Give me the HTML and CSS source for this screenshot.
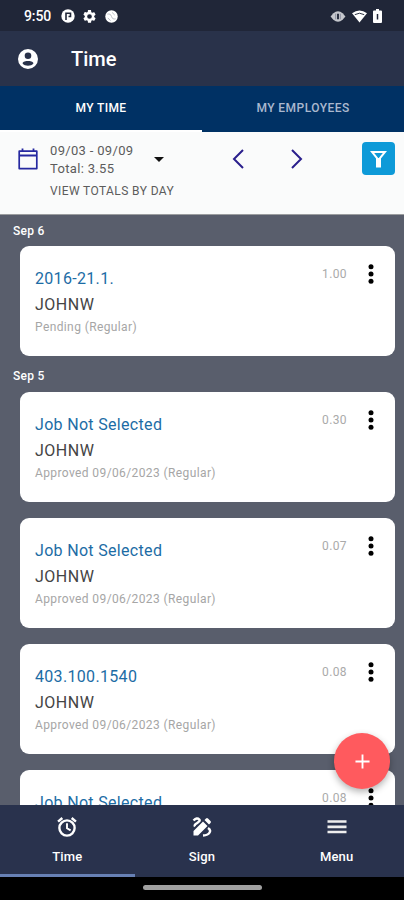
FILE: index.html
```
<!DOCTYPE html>
<html lang="en">
<head>
<meta charset="utf-8">
<title>Time</title>
<link rel="stylesheet" href="styles.css">
</head>
<body>
<div class="app">
  <div class="status">
    <span class="clock">9:50</span>
    <svg class="s-p" viewBox="0 0 14 14"><circle cx="7" cy="7" r="6.7" fill="#fff"/><path d="M5 11V4.200h4.500v3.300H7.500" fill="none" stroke="#202638" stroke-width="1.600"/></svg>
    <svg class="s-gear" viewBox="2 2 20 20"><path fill="#fff" d="M19.14 12.94c.04-.3.06-.61.06-.94s-.02-.64-.07-.94l2.03-1.58a.5.5 0 0 0 .12-.61l-1.92-3.32a.5.5 0 0 0-.59-.22l-2.39.96a7 7 0 0 0-1.62-.94l-.36-2.54A.5.5 0 0 0 13.92 2h-3.84a.5.5 0 0 0-.47.41l-.36 2.54c-.59.24-1.13.57-1.62.94l-2.39-.96a.5.5 0 0 0-.59.22L2.74 8.87a.5.5 0 0 0 .12.61l2.03 1.58a6 6 0 0 0 0 1.88l-2.03 1.58a.5.5 0 0 0-.12.61l1.92 3.32c.12.22.37.29.59.22l2.39-.96c.5.38 1.03.7 1.62.94l.36 2.54c.05.24.24.41.48.41h3.84c.24 0 .44-.17.47-.41l.36-2.54a7 7 0 0 0 1.62-.94l2.39.96c.22.08.47 0 .59-.22l1.92-3.32a.5.5 0 0 0-.12-.61zM12 15.6a3.6 3.6 0 1 1 0-7.2 3.6 3.6 0 0 1 0 7.2z"/></svg>
    <svg class="s-ball" viewBox="0 0 14 14"><circle cx="7" cy="7" r="6.7" fill="#fff"/><path d="M2.500 4.500Q6 3.500 7 7t4.500 2.500M7.500 2.500l3 3M3 8.500l3 3" fill="none" stroke="#b5b8c0" stroke-width="1"/></svg>
    <svg class="s-vib" viewBox="0 0 16 14"><path d="M0 7l3-3.500Q8-1 13 3.500L16 7l-3 3.500Q8 15 3 10.500z" fill="#c5c7cd"/><path d="M5.500 4v6M10.500 4v6" stroke="#85899a" stroke-width="1"/><path d="M8 4v6" stroke="#202638" stroke-width="2"/></svg>
    <svg class="s-wifi" viewBox="0 0 16 13"><path d="M0 3Q8-3 16 3L8 13z" fill="#fff"/><path d="M3 4.500Q8 1.500 13 4.500" fill="none" stroke="#202638" stroke-width="1"/></svg>
    <svg class="s-bat" viewBox="0 0 9 14"><path d="M1 1.500h2V0h3v1.500h2q1 0 1 1V13q0 1-1 1H1q-1 0-1-1V2.500q0-1 1-1z" fill="#fff"/><path d="M4.500 5v5.500" stroke="#202638" stroke-width="1.500"/></svg>
  </div>
  <header class="bar">
    <svg class="avatar" viewBox="2 2 20 20"><path fill="#fff" fill-rule="evenodd" d="M12 2a10 10 0 1 0 0 20 10 10 0 0 0 0-20zm0 3.500a3.300 3.300 0 1 1 0 6.600 3.300 3.300 0 0 1 0-6.600zM6.500 16.300C6.800 14.500 10 13.900 12 13.900s5.200.6 5.500 2.400C16.400 18.100 14 18.700 12 18.700s-4.400-.6-5.500-2.400z"/></svg>
    <h1 class="title">Time</h1>
  </header>
  <nav class="tabs"><span class="tab on">MY TIME</span><span class="tab">MY EMPLOYEES</span></nav>
  <section class="filter">
    <svg class="cal" viewBox="0 0 20 22"><path d="M1.200 3.200h17.600v17.400H1.200z" fill="none" stroke="#2629a0" stroke-width="1.700" stroke-linejoin="round"/><path d="M1 7.500h18M4.500 0.500v3M15.500 0.500v3" stroke="#2629a0" stroke-width="1.800"/></svg>
    <div class="range">
      <span class="r1">09/03 - 09/09</span>
      <span class="r2">Total: 3.55</span>
      <span class="r3">VIEW TOTALS BY DAY</span>
    </div>
    <svg class="caret" viewBox="0 0 10 5"><path d="M0 0h10L5 5z" fill="#111"/></svg>
    <svg class="prev" viewBox="0 0 12 20"><path d="M11 1L2 10l9 9" fill="none" stroke="#2a1f8c" stroke-width="2"/></svg>
    <svg class="next" viewBox="0 0 12 20"><path d="M1 1l9 9-9 9" fill="none" stroke="#2a1f8c" stroke-width="2"/></svg>
    <div class="fbtn"><svg class="funnel" viewBox="0 0 17 18"><path d="M2 2h13L10 8.200V16.500H7V8.200z" fill="none" stroke="#fff" stroke-width="2"/><path d="M6.500 8h4v9h-4z" fill="#fff"/></svg></div>
  </section>
  <main class="list">
    <h2 class="day">Sep 6</h2>
    <article class="card"><div><p class="job">2016-21.1.</p><p class="who">JOHNW</p><p class="st">Pending (Regular)</p></div><span class="hrs">1.00</span><svg class="dots" viewBox="0 0 6 20"><circle cx="3" cy="2.700" r="2.500"/><circle cx="3" cy="10" r="2.500"/><circle cx="3" cy="17.300" r="2.500"/></svg></article>
    <h2 class="day">Sep 5</h2>
    <article class="card"><div><p class="job">Job Not Selected</p><p class="who">JOHNW</p><p class="st">Approved 09/06/2023 (Regular)</p></div><span class="hrs">0.30</span><svg class="dots" viewBox="0 0 6 20"><circle cx="3" cy="2.700" r="2.500"/><circle cx="3" cy="10" r="2.500"/><circle cx="3" cy="17.300" r="2.500"/></svg></article>
    <article class="card"><div><p class="job">Job Not Selected</p><p class="who">JOHNW</p><p class="st">Approved 09/06/2023 (Regular)</p></div><span class="hrs">0.07</span><svg class="dots" viewBox="0 0 6 20"><circle cx="3" cy="2.700" r="2.500"/><circle cx="3" cy="10" r="2.500"/><circle cx="3" cy="17.300" r="2.500"/></svg></article>
    <article class="card"><div><p class="job">403.100.1540</p><p class="who">JOHNW</p><p class="st">Approved 09/06/2023 (Regular)</p></div><span class="hrs">0.08</span><svg class="dots" viewBox="0 0 6 20"><circle cx="3" cy="2.700" r="2.500"/><circle cx="3" cy="10" r="2.500"/><circle cx="3" cy="17.300" r="2.500"/></svg></article>
    <article class="card"><div><p class="job">Job Not Selected</p></div><span class="hrs">0.08</span><svg class="dots" viewBox="0 0 6 20"><circle cx="3" cy="2.700" r="2.500"/><circle cx="3" cy="10" r="2.500"/><circle cx="3" cy="17.300" r="2.500"/></svg></article>
  </main>
  <button class="fab" aria-label="Add"><svg viewBox="0 0 16 16"><path d="M8 .5v15M.5 8h15" stroke="#fff" stroke-width="2"/></svg></button>
  <nav class="bottom">
    <div class="item on"><svg class="ic" viewBox="1.500 1.500 21 21"><g fill="none" stroke="#fff"><circle cx="12" cy="13" r="8" stroke-width="2.500"/><path d="M12 8v5.300l3.800 2.300" stroke-width="2"/><path d="M2.600 6.300l4.500-3.800M21.400 6.300l-4.500-3.800" stroke-width="2.600"/></g></svg><span>Time</span></div>
    <div class="item"><svg class="ic" viewBox="0 0 20 20"><path d="M1.500 18.500v-4.500L11 4.500l4.500 4.500-9.500 9.500zM12.500 3l1.500-1.500q1-1 2 0l2.500 2.500q1 1 0 2L17 7.500z" fill="#fff"/><path d="M1.500 3.500Q5 0 7.300 2.500C9.500 5.300 1 6.500 3 9.500M16 11c4 2.500 2 7-5 7.500" fill="none" stroke="#fff" stroke-width="2.400"/></svg><span>Sign</span></div>
    <div class="item"><svg class="ic" viewBox="0 0 20 20"><path d="M.5 4.500h19M.5 9.800h19M.5 15h19" stroke="#eee" stroke-width="2.700"/></svg><span>Menu</span></div>
  </nav>
  <div class="gesture"><span class="pill"></span></div>
</div>
</body>
</html>
```
FILE: styles.css
```
* { box-sizing: border-box; margin: 0; padding: 0; }
body { font-family: Roboto, "Liberation Sans", sans-serif; }
svg { display: block; flex: none; }
.app { position: relative; width: 404px; height: 900px; display: flex; flex-direction: column; overflow: hidden; background: #595e6c; }
.status { height: 31px; background: #202638; display: flex; align-items: center; padding: 1px 22px 0 24px; flex: none; }
.clock { font-size: 14px; font-weight: 500; color: #fff; width: 37px; letter-spacing: -.1px; }
.s-p { width: 14px; height: 14px; }
.s-gear { width: 13px; height: 13px; margin-left: 8px; }
.s-ball { width: 13px; height: 13px; margin-left: 9px; }
.s-vib { width: 16px; height: 13px; margin-left: auto; }
.s-wifi { width: 15px; height: 13px; margin-left: 6px; }
.s-bat { width: 9px; height: 14px; margin-left: 6px; }
.bar { height: 55px; flex: none; background: #29324a; display: flex; align-items: center; padding-left: 18px; }
.avatar { width: 20px; height: 20px; }
.title { font-size: 20px; font-weight: 500; color: #fff; margin-left: 33px; line-height: 24px; }
.tabs { height: 46px; flex: none; background: #003164; display: flex; }
.tab { flex: 1; display: flex; align-items: center; justify-content: center; font-size: 12px; font-weight: 500; color: #aab8cf; border-bottom: 2px solid #003164; letter-spacing: .45px; }
.tab.on { color: #fff; border-color: #fff; letter-spacing: .35px; }
.filter { height: 83px; flex: none; background: #fafbfb; display: flex; border-bottom: 1px solid #9b9d9f; }
.cal { width: 20px; height: 22px; margin: 16px 0 0 18px; }
.range { width: 126px; margin: 10px 0 0 12px; display: flex; flex-direction: column; white-space: nowrap; color: #5c5c5c; }
.r1, .r2 { font-size: 13px; line-height: 18px; letter-spacing: .32px; }
.r2 { line-height: 17px; }
.r3 { font-size: 12px; line-height: 18px; margin-top: 5px; letter-spacing: .4px; }
.caret { width: 10px; height: 5px; margin: 25px 0 0 -22px; }
.prev { width: 12px; height: 20px; margin: 17px 0 0 68px; }
.next { width: 12px; height: 20px; margin: 17px 0 0 47px; }
.fbtn { width: 33px; height: 33px; margin: 10px 9px 0 auto; border-radius: 4px; background: #0e9ad8; display: flex; align-items: center; justify-content: center; }
.funnel { width: 17px; height: 18px; }
.list { height: 590px; flex: none; overflow: hidden; }
.day { height: 31px; padding: 8px 0 0 13px; font-size: 12px; line-height: 17px; font-weight: 500; color: #fff; letter-spacing: .3px; }
.card { width: 375px; height: 110px; margin: 0 0 16px 20px; border-radius: 9px; background: #fff; display: flex; padding-left: 15px; white-space: nowrap; }
.card + .day { height: 36px; margin-top: -16px; padding-top: 12px; }
.card > div { width: 287px; padding-top: 20px; }
.job { font-size: 16px; line-height: 26px; color: #1c6ca5; letter-spacing: .32px; }
.who { font-size: 16px; line-height: 26px; color: #444; letter-spacing: .5px; }
.st { font-size: 12px; line-height: 18px; color: #a6a6a6; letter-spacing: .39px; }
.hrs { font-size: 12px; line-height: 18px; width: 46px; margin-top: 19px; color: #aaa; letter-spacing: .4px; }
.dots { width: 6px; height: 20px; margin-top: 18px; fill: #000; }
.fab { position: absolute; left: 334px; top: 733px; width: 56px; height: 56px; border: 0; border-radius: 50%; background: #ff5a5e; display: grid; place-items: center; box-shadow: 0 3px 7px rgba(0,0,0,.3); }
.fab svg { width: 15px; height: 15px; }
.bottom { height: 72px; flex: none; background: #29324d; display: flex; }
.item { flex: 1; display: flex; flex-direction: column; align-items: center; padding-top: 12px; color: #fff; font-size: 13px; font-weight: 500; line-height: 18px; border-bottom: 3px solid transparent; letter-spacing: .2px; }
.item.on { border-color: #6780b4; }
.ic { width: 20px; height: 20px; margin-bottom: 11px; }
.gesture { flex: 1; background: #000; display: flex; justify-content: center; padding-top: 8px; }
.pill { width: 119px; height: 5px; border-radius: 3px; background: #a0a0a0; }
```
